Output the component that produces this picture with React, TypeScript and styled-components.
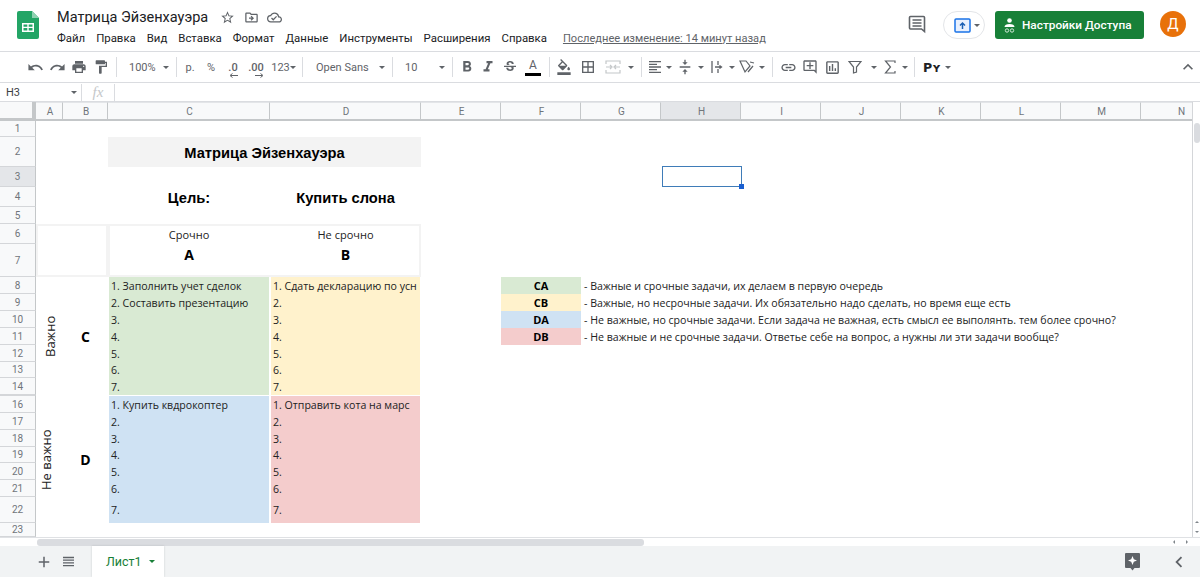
import React from 'react'
import styled, { createGlobalStyle, css } from 'styled-components'
import {
  MdAdd,
  MdBorderAll,
  MdExpandLess,
  MdChevronLeft,
  MdFormatAlignLeft,
  MdFormatBold,
  MdFormatColorFill,
  MdFormatItalic,
  MdFormatPaint,
  MdLink,
  MdOutlineAddComment,
  MdOutlineCloudDone,
  MdOutlineDriveFileMove,
  MdOutlineInsertChart,
  MdPrint,
  MdRedo,
  MdStarBorder,
  MdStrikethroughS,
  MdUndo,
  MdVerticalAlignCenter,
} from 'react-icons/md'

const GlobalStyle = createGlobalStyle`
  html, body {
    margin: 0;
    height: 100%;
    background: #fff;
    font-family: 'Roboto', 'Liberation Sans', sans-serif;
  }
  #root { height: 100%; }
`

const Page = styled.div`
  display: flex;
  flex-direction: column;
  height: 100vh;
  overflow: hidden;
`

/* header */

const Header = styled.header`
  display: flex;
  flex: 0 0 52px;
  box-sizing: border-box;
  border-bottom: 1px solid #dadce0;
  padding: 11px 14px 0 17px;
`

const DocInfo = styled.div`
  margin: -1px 0 0 18px;
`

const TitleRow = styled.div`
  display: flex;
  align-items: center;
  height: 14px;
  color: #5f6368;
  font-size: 15px;
`

const Title = styled.span`
  width: 159px;
  color: #202124;
  font-size: 14.5px;
`

const TitleIcon = styled.span`
  display: flex;
  width: 23.5px;
  justify-content: center;
`

const Menu = styled.nav`
  display: flex;
  align-items: center;
  gap: 11px;
  height: 14px;
  margin-top: 7px;
  color: #202124;
  font-size: 11.4px;
`

const LastEdit = styled.a`
  margin-left: 5px;
  color: #5f6368;
  font-size: 11.1px;
  text-decoration: underline;
`

const HeaderActions = styled.div`
  display: flex;
  align-items: flex-start;
  margin-left: auto;
`

const CommentButton = styled.span`
  display: flex;
  margin: 3px 16px 0 0;
  color: #5f6368;
`

const PresentPill = styled.div`
  display: flex;
  align-items: center;
  gap: 3px;
  box-sizing: border-box;
  width: 42px;
  height: 28px;
  margin-right: 10px;
  padding-left: 10px;
  border: 1px solid #e3e5e8;
  border-radius: 14px;
`

const ShareButton = styled.button`
  display: flex;
  align-items: center;
  gap: 6px;
  width: 149px;
  height: 28px;
  margin-right: 16px;
  padding: 0 0 0 8px;
  border: 0;
  border-radius: 3px;
  background: #188038;
  color: #fff;
  font: 500 11.8px 'Roboto', sans-serif;
`

const Avatar = styled.div`
  display: flex;
  align-items: center;
  justify-content: center;
  width: 26px;
  height: 26px;
  border-radius: 50%;
  background: #e8710a;
  color: #fff;
  font-size: 15px;
`

/* toolbar */

const Toolbar = styled.div`
  display: flex;
  flex: 0 0 31px;
  align-items: center;
  box-sizing: border-box;
  padding: 0 2px 0 24px;
  border-bottom: 1px solid #dadce0;
  color: #5f6368;
`

const ToolButton = styled.span<{ $w: number; $pad?: number; $muted?: boolean }>`
  display: flex;
  flex: 0 0 ${p => p.$w}px;
  align-items: center;
  justify-content: ${p => (p.$pad ? 'space-between' : 'center')};
  box-sizing: border-box;
  height: 20px;
  padding: ${p => (p.$pad ? `0 3px 0 ${p.$pad}px` : '0')};
  color: ${p => (p.$muted ? '#c4c7c9' : 'inherit')};
  font-size: 11px;
`

const ToolDivider = styled.span<{ $gap?: number }>`
  flex: 0 0 1px;
  height: 20px;
  margin: 0 ${p => p.$gap ?? 4}px;
  background: #dadce0;
`

const Caret = styled.i`
  display: inline-block;
  width: 0;
  height: 0;
  border-top: 3px solid #5f6368;
  border-right: 3px solid transparent;
  border-left: 3px solid transparent;
`

const NumberFormat = styled.span`
  position: relative;
  font-size: 11px;
  font-weight: 500;
`

const DecimalArrow = styled.svg`
  position: absolute;
  right: 0;
  bottom: -4px;
`

const ColorA = styled.span`
  display: flex;
  flex-direction: column;
  align-items: center;
  width: 16px;
  font-size: 12px;
  line-height: 13px;

  &::after {
    content: '';
    align-self: stretch;
    height: 3px;
    margin-top: 1px;
    background: #000;
  }
`

const Currency = styled.span`
  color: #202124;
  font-family: 'DejaVu Sans', sans-serif;
  font-size: 12.5px;
  font-weight: 700;
`

const Collapse = styled.span`
  display: flex;
  margin-left: auto;
`

/* formula bar */

const FormulaBar = styled.div`
  display: flex;
  flex: 0 0 19px;
  align-items: center;
  box-sizing: border-box;
  height: 19px;
  border-bottom: 1px solid #dadce0;
  color: #3c4043;
  font-size: 11px;
`

const NameBox = styled.div`
  display: flex;
  align-items: center;
  justify-content: space-between;
  box-sizing: border-box;
  width: 82px;
  height: 17px;
  padding: 0 4px 0 6px;
  border-right: 1px solid #dadce0;
`

const Fx = styled.div`
  width: 33px;
  height: 17px;
  box-sizing: border-box;
  border-right: 1px solid #dadce0;
  color: #c4c7c9;
  font: italic 15px/16px 'Liberation Serif', serif;
  text-align: center;
`

/* sheet */

const SheetArea = styled.div`
  display: flex;
  flex: 1;
  min-height: 0;
`

const columnWidths = [36, 27, 45, 162, 151, 80, 80, 80, 80, 80, 80, 80, 80, 80, 80]
const rowHeights = [19, 16, 30, 20, 20, 17, 20, 33, 17, 17, 17, 17, 17, 16, 17, 1, 17, 17, 17, 16, 17, 17, 26, 14]

const Sheet = styled.div`
  display: grid;
  flex: 0 0 1192px;
  overflow: hidden;
  grid-template-columns: ${columnWidths.map(w => `${w}px`).join(' ')};
  grid-template-rows: ${rowHeights.map(h => `${h}px`).join(' ')};
  font-family: 'Open Sans', sans-serif;
`

type Place = { $col: number; $row: number; $cols?: number; $rows?: number }

const placed = css<Place>`
  grid-column: ${p => p.$col} / span ${p => p.$cols ?? 1};
  grid-row: ${p => p.$row} / span ${p => p.$rows ?? 1};
`

const headerCell = css<{ $active?: boolean }>`
  display: flex;
  align-items: center;
  justify-content: center;
  box-sizing: border-box;
  background: ${p => (p.$active ? '#e4e6e9' : '#f8f9fa')};
  color: #70757a;
  font: 10px 'Roboto', sans-serif;
`

const Corner = styled.div`
  grid-column: 1;
  grid-row: 1;
  box-sizing: border-box;
  border-right: 4px solid #c4c7c9;
  border-bottom: 3px solid #c4c7c9;
  background: #f8f9fa;
`

const ColumnHeader = styled.div<Place & { $active?: boolean }>`
  ${placed}
  ${headerCell}
  padding-left: 2px;
  border-top: 1px solid #e3e5e8;
  border-right: 1px solid #c4c7c9;
  border-bottom: 2px solid #c4c7c9;
`

const RowHeader = styled.div<Place & { $active?: boolean }>`
  ${placed}
  ${headerCell}
  border-right: 1px solid #c4c7c9;
  border-bottom: 1px solid #d4d6d9;
`

const Frame = styled.div<Place>`
  ${placed}
  box-sizing: border-box;
  border: 2px solid #f3f3f3;
`

const TitleCell = styled.div<Place>`
  ${placed}
  display: flex;
  align-items: center;
  justify-content: center;
  padding-top: 1px;
  background: #f3f3f3;
  color: #000;
  font: 700 14.7px 'Liberation Sans', sans-serif;
`

const GoalCell = styled.div<Place>`
  ${placed}
  display: flex;
  align-items: center;
  justify-content: center;
  padding-top: 1px;
  color: #000;
  font: 700 14.7px 'Liberation Sans', sans-serif;
  white-space: nowrap;
`

const AxisCell = styled.div<Place>`
  ${placed}
  display: flex;
  align-items: center;
  justify-content: center;
  color: #222;
  font-size: 11px;
`

const AxisLetter = styled.div<Place>`
  ${placed}
  display: flex;
  align-items: flex-start;
  justify-content: center;
  padding-top: 1px;
  color: #000;
  font-size: 14px;
  font-weight: 700;
`

const RowLetter = styled.div<Place>`
  ${placed}
  display: flex;
  align-items: center;
  justify-content: center;
  color: #000;
  font-size: 14px;
  font-weight: 700;
`

const VerticalLabel = styled.div<Place & { $nudge?: number }>`
  ${placed}
  display: flex;
  align-items: center;
  justify-content: center;
  padding-left: ${p => p.$nudge ?? 0}px;
  color: #222;
  font-size: 13px;
  writing-mode: vertical-rl;
  transform: rotate(180deg);
`

const TaskCell = styled.div<Place & { $fill: string }>`
  ${placed}
  display: flex;
  align-items: center;
  overflow: hidden;
  box-sizing: border-box;
  padding-left: 2px;
  border-right: 1px solid #fff;
  border-left: 1px solid #fff;
  background: ${p => p.$fill};
  color: #222;
  font-size: 10.6px;
  white-space: nowrap;
`

const LegendCode = styled.div<Place & { $fill: string }>`
  ${placed}
  display: flex;
  align-items: center;
  justify-content: center;
  background: ${p => p.$fill};
  color: #000;
  font-size: 11px;
  font-weight: 700;
`

const LegendText = styled.div<Place>`
  ${placed}
  display: flex;
  align-items: center;
  padding-left: 3px;
  color: #222;
  font-size: 10.6px;
  white-space: nowrap;
`

const SelectedCell = styled.div<Place>`
  ${placed}
  position: relative;
  box-sizing: border-box;
  margin: -1px -1px 0 1px;
  border: 1px solid #3f7cb8;
`

const FillHandle = styled.span`
  position: absolute;
  right: -3px;
  bottom: -3px;
  width: 5px;
  height: 5px;
  background: #1a5fd0;
`

const VScroll = styled.div`
  display: flex;
  flex: 0 0 8px;
  flex-direction: column;
  align-items: center;
  box-sizing: border-box;
  border-left: 1px solid #d4d6d9;
  padding-top: 21px;
`

const VThumb = styled.div`
  width: 6px;
  height: 20px;
  border-radius: 3px;
  background: #dadce0;
`

const ScrollArrows = styled.div`
  display: flex;
  flex-direction: column;
  gap: 8px;
  margin-top: auto;
  margin-bottom: 4px;
`

const ArrowGlyph = styled.i<{ $dir: 'up' | 'down' | 'left' | 'right' }>`
  display: block;
  width: 0;
  height: 0;
  border: 2px solid transparent;
  ${p => (p.$dir === 'up' ? 'border-bottom-color: #80868b; border-top-width: 0;' : '')}
  ${p => (p.$dir === 'down' ? 'border-top-color: #80868b; border-bottom-width: 0;' : '')}
  ${p => (p.$dir === 'left' ? 'border-right-color: #80868b; border-left-width: 0;' : '')}
  ${p => (p.$dir === 'right' ? 'border-left-color: #80868b; border-right-width: 0;' : '')}
`

const HScroll = styled.div`
  display: flex;
  flex: 0 0 9px;
  align-items: center;
  box-sizing: border-box;
  padding: 0 12px 0 37px;
  border-top: 1px solid #dfe1e4;
`

const HThumb = styled.div`
  width: 607px;
  height: 7px;
  border-radius: 3px;
  background: #dadce0;
`

const HArrows = styled.div`
  display: flex;
  align-items: center;
  gap: 11px;
  margin-left: auto;
`

/* sheet tabs */

const TabBar = styled.footer`
  display: flex;
  flex: 0 0 31px;
  align-items: stretch;
  background: #f1f3f4;
  color: #5f6368;
`

const TabAction = styled.span<{ $w: number }>`
  display: flex;
  flex: 0 0 ${p => p.$w}px;
  align-items: center;
  justify-content: flex-end;
`

const SheetTab = styled.div`
  display: flex;
  align-items: center;
  gap: 7px;
  box-sizing: border-box;
  width: 72px;
  margin-left: 18px;
  padding-left: 14px;
  background: #fff;
  color: #188038;
  font-size: 12.5px;
  box-shadow: 0 0 2px rgba(60, 64, 67, 0.2);
`

const TabCaret = styled(Caret)`
  border-top-color: #188038;
`

const TabBarEnd = styled.div`
  display: flex;
  align-items: center;
  margin-left: auto;
  padding-right: 10px;
`

const ExploreIcon = styled.svg`
  margin-right: 28px;
`

const columns = ['A', 'B', 'C', 'D', 'E', 'F', 'G', 'H', 'I', 'J', 'K', 'L', 'M', 'N']
const GREEN = '#d9ead3'
const YELLOW = '#fff2cc'
const BLUE = '#cfe2f3'
const RED = '#f4cccc'

const upperTasks = [
  ['1. Заполнить учет сделок', '1. Сдать декларацию по усн'],
  ['2. Составить презентацию', '2.'],
  ['3.', '3.'],
  ['4.', '4.'],
  ['5.', '5.'],
  ['6.', '6.'],
  ['7.', '7.'],
]

const lowerTasks = [
  ['1. Купить квдрокоптер', '1. Отправить кота на марс'],
  ['2.', '2.'],
  ['3.', '3.'],
  ['4.', '4.'],
  ['5.', '5.'],
  ['6.', '6.'],
  ['7.', '7.'],
]

const legend = [
  ['CA', GREEN, '- Важные и срочные задачи, их делаем в первую очередь'],
  ['CB', YELLOW, '- Важные, но несрочные задачи. Их обязательно надо сделать, но время еще есть'],
  ['DA', BLUE, '- Не важные, но срочные задачи. Если задача не важная, есть смысл ее выполянть. тем более срочно?'],
  ['DB', RED, '- Не важные и не срочные задачи. Ответье себе на вопрос, а нужны ли эти задачи вообще?'],
]

const menuItems = ['Файл', 'Правка', 'Вид', 'Вставка', 'Формат', 'Данные', 'Инструменты', 'Расширения', 'Справка']

// grid line of a sheet row: line 1 holds the column letters
const rowLine = (n: number) => n + 1

function SheetsLogo() {
  return (
    <svg width="22" height="28" viewBox="0 0 22 28">
      <path d="M2 0h13l7 7v19a2 2 0 0 1-2 2H2a2 2 0 0 1-2-2V2a2 2 0 0 1 2-2z" fill="#23a566" />
      <path d="M15 0l7 7h-7z" fill="#8ed1b1" />
      <path d="M5 12h12v9H5zm1.500 1.500v2.200h3.800v-2.200zm5.200 0v2.200h3.800v-2.200zm-5.200 3.600v2.400h3.800v-2.400zm5.200 0v2.400h3.800v-2.400z" fill="#fff" fillRule="evenodd" />
    </svg>
  )
}

function DecimalIcon({ label, dir }: { label: string; dir: 'left' | 'right' }) {
  return (
    <NumberFormat>
      {label}
      <DecimalArrow width="9" height="5" viewBox="0 0 9 5">
        {dir === 'left' ? <path d="M9 2.500H2M3.500 0.500L1 2.500l2.500 2" stroke="#5f6368" fill="none" /> : <path d="M0 2.500h7M5.500 0.500L8 2.500l-2.500 2" stroke="#5f6368" fill="none" />}
      </DecimalArrow>
    </NumberFormat>
  )
}

function TopHeader() {
  return (
    <Header>
      <SheetsLogo />
      <DocInfo>
        <TitleRow>
          <Title>Матрица Эйзенхауэра</Title>
          <TitleIcon><MdStarBorder /></TitleIcon>
          <TitleIcon><MdOutlineDriveFileMove /></TitleIcon>
          <TitleIcon><MdOutlineCloudDone /></TitleIcon>
        </TitleRow>
        <Menu>
          {menuItems.map(item => <span key={item}>{item}</span>)}
          <LastEdit>Последнее изменение: 14 минут назад</LastEdit>
        </Menu>
      </DocInfo>
      <HeaderActions>
        <CommentButton>
          <svg width="20" height="20" viewBox="0 0 20 20">
            <path d="M3.500 2.500h13a1 1 0 0 1 1 1v14l-3-2.500h-11a1 1 0 0 1-1-1v-10.500a1 1 0 0 1 1-1z" fill="none" stroke="#5f6368" strokeWidth="1.600" />
            <path d="M5.500 6h9M5.500 9h9M5.500 12h9" stroke="#5f6368" strokeWidth="1.500" />
          </svg>
        </CommentButton>
        <PresentPill>
          <svg width="17" height="15" viewBox="0 0 17 15">
            <rect x="1" y="1" width="15" height="13" rx="1" fill="#e8f0fe" stroke="#1a73e8" strokeWidth="1.500" />
            <path d="M8.500 11V6M6 7.500l2.500-2.500 2.500 2.500" fill="none" stroke="#1a5fb4" strokeWidth="1.500" />
          </svg>
          <Caret />
        </PresentPill>
        <ShareButton>
          <svg width="13" height="15" viewBox="0 0 13 15">
            <circle cx="6.500" cy="2.500" r="2.300" fill="#fff" />
            <path d="M1.500 9c0-2 2-3 5-3s5 1 5 3z" fill="#fff" />
            <circle cx="4" cy="12.500" r="1.700" fill="none" stroke="#cfe8d6" />
            <circle cx="9" cy="12.500" r="1.700" fill="none" stroke="#cfe8d6" />
          </svg>
          Настройки Доступа
        </ShareButton>
        <Avatar>Д</Avatar>
      </HeaderActions>
    </Header>
  )
}

function Tools() {
  return (
    <Toolbar>
      <ToolButton $w={22}><MdUndo size={17} /></ToolButton>
      <ToolButton $w={22}><MdRedo size={17} /></ToolButton>
      <ToolButton $w={22}><MdPrint size={16} /></ToolButton>
      <ToolButton $w={22}><MdFormatPaint size={16} /></ToolButton>
      <ToolDivider />
      <ToolButton $w={51} $pad={8}>100%<Caret /></ToolButton>
      <ToolDivider />
      <ToolButton $w={18}>р.</ToolButton>
      <ToolButton $w={24}>%</ToolButton>
      <ToolButton $w={20}><DecimalIcon label=".0" dir="left" /></ToolButton>
      <ToolButton $w={26}><DecimalIcon label=".00" dir="right" /></ToolButton>
      <ToolButton $w={29}>123<Caret /></ToolButton>
      <ToolDivider />
      <ToolButton $w={81} $pad={9}>Open Sans<Caret /></ToolButton>
      <ToolDivider />
      <ToolButton $w={51} $pad={8}>10<Caret /></ToolButton>
      <ToolDivider />
      <ToolButton $w={20}><MdFormatBold size={18} /></ToolButton>
      <ToolButton $w={22}><MdFormatItalic size={18} /></ToolButton>
      <ToolButton $w={22}><MdStrikethroughS size={16} /></ToolButton>
      <ToolButton $w={24}><ColorA>A</ColorA></ToolButton>
      <ToolDivider />
      <ToolButton $w={20}><MdFormatColorFill size={16} /></ToolButton>
      <ToolButton $w={28}><MdBorderAll size={16} /></ToolButton>
      <ToolButton $w={22} $muted>
        <svg width="16" height="14" viewBox="0 0 16 14">
          <path d="M1 4V1h14v3M1 10v3h14v-3M1 7h5M15 7h-5M5 5l2 2-2 2M11 5L9 7l2 2" fill="none" stroke="#c4c7c9" strokeWidth="1.200" />
        </svg>
      </ToolButton>
      <ToolButton $w={13}><Caret /></ToolButton>
      <ToolDivider />
      <ToolButton $w={18}><MdFormatAlignLeft size={16} /></ToolButton>
      <ToolButton $w={10}><Caret /></ToolButton>
      <ToolButton $w={22}><MdVerticalAlignCenter size={16} /></ToolButton>
      <ToolButton $w={10}><Caret /></ToolButton>
      <ToolButton $w={22}>
        <svg width="14" height="14" viewBox="0 0 14 14">
          <path d="M2 1v12M8 1v4M8 9v4M5 7h6M9.500 5.500L11.500 7 9.500 8.500" fill="none" stroke="#5f6368" strokeWidth="1.300" />
        </svg>
      </ToolButton>
      <ToolButton $w={8}><Caret /></ToolButton>
      <ToolButton $w={22}>
        <svg width="16" height="14" viewBox="0 0 16 14">
          <path d="M1 1h6l4 5-5 6L1 1zM11 2l4 1M9 12l5-6" fill="none" stroke="#5f6368" strokeWidth="1.200" />
        </svg>
      </ToolButton>
      <ToolButton $w={8}><Caret /></ToolButton>
      <ToolDivider $gap={6} />
      <ToolButton $w={18}><MdLink size={17} /></ToolButton>
      <ToolButton $w={26}><MdOutlineAddComment size={16} /></ToolButton>
      <ToolButton $w={18}><MdOutlineInsertChart size={17} /></ToolButton>
      <ToolButton $w={28}>
        <svg width="14" height="14" viewBox="0 0 14 14">
          <path d="M1 1.500h12L8.500 7v5l-3 1V7z" fill="none" stroke="#5f6368" strokeWidth="1.200" />
        </svg>
      </ToolButton>
      <ToolButton $w={10}><Caret /></ToolButton>
      <ToolButton $w={22}>
        <svg width="12" height="14" viewBox="0 0 12 14">
          <path d="M11 3V1H1.500L6.500 7l-5 6H11v-2" fill="none" stroke="#5f6368" strokeWidth="1.200" />
        </svg>
      </ToolButton>
      <ToolButton $w={8}><Caret /></ToolButton>
      <ToolDivider $gap={5} />
      <ToolButton $w={24}><Currency>Pʏ</Currency></ToolButton>
      <ToolButton $w={8}><Caret /></ToolButton>
      <Collapse><MdExpandLess size={20} /></Collapse>
    </Toolbar>
  )
}

function SheetGrid() {
  const rows = Array.from({ length: 23 }, (_, i) => i + 1).filter(n => n !== 15)
  return (
    <Sheet>
      <Corner />
      {columns.map((name, i) => (
        <ColumnHeader key={name} $col={i + 2} $row={1} $active={name === 'H'}>{name}</ColumnHeader>
      ))}
      {rows.map(n => (
        <RowHeader key={n} $col={1} $row={rowLine(n)} $active={n === 3}>{n}</RowHeader>
      ))}
      <RowHeader $col={1} $row={rowLine(15)} />

      <TitleCell $col={4} $row={rowLine(2)} $cols={2}>Матрица Эйзенхауэра</TitleCell>
      <GoalCell $col={4} $row={rowLine(4)}>Цель:</GoalCell>
      <GoalCell $col={5} $row={rowLine(4)}>Купить слона</GoalCell>

      <Frame $col={2} $row={rowLine(6)} $cols={2} $rows={2} />
      <Frame $col={4} $row={rowLine(6)} $cols={2} $rows={2} />
      <AxisCell $col={4} $row={rowLine(6)}>Срочно</AxisCell>
      <AxisCell $col={5} $row={rowLine(6)}>Не срочно</AxisCell>
      <AxisLetter $col={4} $row={rowLine(7)}>A</AxisLetter>
      <AxisLetter $col={5} $row={rowLine(7)}>B</AxisLetter>

      <VerticalLabel $col={2} $row={rowLine(8)} $rows={7}>Важно</VerticalLabel>
      <RowLetter $col={3} $row={rowLine(8)} $rows={7}>C</RowLetter>
      <VerticalLabel $col={2} $row={rowLine(16)} $rows={7} $nudge={8}>Не важно</VerticalLabel>
      <RowLetter $col={3} $row={rowLine(16)} $rows={7}>D</RowLetter>

      {upperTasks.map(([left, right], i) => (
        <React.Fragment key={left}>
          <TaskCell $col={4} $row={rowLine(8 + i)} $fill={GREEN}>{left}</TaskCell>
          <TaskCell $col={5} $row={rowLine(8 + i)} $fill={YELLOW}>{right}</TaskCell>
        </React.Fragment>
      ))}
      {lowerTasks.map(([left, right], i) => (
        <React.Fragment key={left}>
          <TaskCell $col={4} $row={rowLine(16 + i)} $fill={BLUE}>{left}</TaskCell>
          <TaskCell $col={5} $row={rowLine(16 + i)} $fill={RED}>{right}</TaskCell>
        </React.Fragment>
      ))}

      {legend.map(([code, fill, text], i) => (
        <React.Fragment key={code}>
          <LegendCode $col={7} $row={rowLine(8 + i)} $fill={fill}>{code}</LegendCode>
          <LegendText $col={8} $row={rowLine(8 + i)} $cols={8}>{text}</LegendText>
        </React.Fragment>
      ))}

      <SelectedCell $col={9} $row={rowLine(3)}><FillHandle /></SelectedCell>
    </Sheet>
  )
}

export default function App() {
  return (
    <Page>
      <GlobalStyle />
      <TopHeader />
      <Tools />
      <FormulaBar>
        <NameBox>H3<Caret /></NameBox>
        <Fx>fx</Fx>
      </FormulaBar>
      <SheetArea>
        <SheetGrid />
        <VScroll>
          <VThumb />
          <ScrollArrows>
            <ArrowGlyph $dir="up" />
            <ArrowGlyph $dir="down" />
          </ScrollArrows>
        </VScroll>
      </SheetArea>
      <HScroll>
        <HThumb />
        <HArrows>
          <ArrowGlyph $dir="left" />
          <ArrowGlyph $dir="right" />
        </HArrows>
      </HScroll>
      <TabBar>
        <TabAction $w={53}><MdAdd size={18} /></TabAction>
        <TabAction $w={21}>
          <svg width="11" height="11" viewBox="0 0 11 11">
            <path d="M0 1.500h11M0 4.200h11M0 6.900h11M0 9.600h11" stroke="#5f6368" strokeWidth="1.300" />
          </svg>
        </TabAction>
        <SheetTab>Лист1<TabCaret /></SheetTab>
        <TabBarEnd>
          <ExploreIcon width="15" height="18" viewBox="0 0 15 18">
            <path d="M1 0h13a1 1 0 0 1 1 1v13a1 1 0 0 1-1 1H9.500L7.500 17.500 5.500 15H1a1 1 0 0 1-1-1V1a1 1 0 0 1 1-1z" fill="#5f6368" />
            <path d="M7.500 3l1.300 3.200L12 7.500 8.800 8.800 7.500 12 6.200 8.800 3 7.500l3.200-1.300z" fill="#fff" />
          </ExploreIcon>
          <MdChevronLeft size={22} />
        </TabBarEnd>
      </TabBar>
    </Page>
  )
}
